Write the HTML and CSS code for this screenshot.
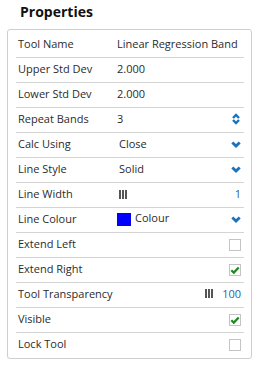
FILE: index.html
```html
<!DOCTYPE html>
<html>
<head>
    <meta charset="UTF-8">
    <link rel="stylesheet" href="styles.css">
</head>
<body>
    <div class="panel">
        <div class="panel_title">Properties</div>

        <div class="props">
            <div class="prop">
                <div class="prop_label">Tool Name</div>
                <div class="prop_value">Linear Regression Band</div>
            </div>
            <div class="prop">
                <div class="prop_label">Upper Std Dev</div>
                <div class="prop_value">2.000</div>
            </div>
            <div class="prop">
                <div class="prop_label">Lower Std Dev</div>
                <div class="prop_value">2.000</div>
            </div>
            <div class="prop">
                <div class="prop_label">Repeat Bands</div>
                <div class="prop_value">3</div>
                <svg class="spin" width="8" height="12" viewBox="0 0 8 12">
                    <path d="M1 5 L4 2 L7 5 M1 7 L4 10 L7 7" fill="none" stroke="#1b72bd" stroke-width="2.4"/>
                </svg>
            </div>
            <div class="prop">
                <div class="prop_label">Calc Using</div>
                <div class="prop_value sel">Close</div>
                <svg class="chev" width="10" height="7" viewBox="0 0 10 7">
                    <path d="M1.3 1.4 L5 5 L8.7 1.4" fill="none" stroke="#1b72bd" stroke-width="2.8"/>
                </svg>
            </div>
            <div class="prop">
                <div class="prop_label">Line Style</div>
                <div class="prop_value sel">Solid</div>
                <svg class="chev" width="10" height="7" viewBox="0 0 10 7">
                    <path d="M1.3 1.4 L5 5 L8.7 1.4" fill="none" stroke="#1b72bd" stroke-width="2.8"/>
                </svg>
            </div>
            <div class="prop">
                <div class="prop_label">Line Width</div>
                <div class="prop_value sel"><span class="bars"><i></i><i></i><i></i></span></div>
                <div class="num">1</div>
            </div>
            <div class="prop">
                <div class="prop_label">Line Colour</div>
                <div class="prop_value colour"><span class="swatch"></span><span class="colour_text">Colour</span></div>
                <svg class="chev" width="10" height="7" viewBox="0 0 10 7">
                    <path d="M1.3 1.4 L5 5 L8.7 1.4" fill="none" stroke="#1b72bd" stroke-width="2.8"/>
                </svg>
            </div>
            <div class="prop">
                <div class="prop_label">Extend Left</div>
                <div class="prop_value"></div>
                <span class="check"></span>
            </div>
            <div class="prop">
                <div class="prop_label">Extend Right</div>
                <div class="prop_value"></div>
                <span class="check"><svg width="10" height="10" viewBox="0 0 10 10"><path d="M1.3 5.2 L3.8 7.6 L8.7 2.4" fill="none" stroke="#1e8a1e" stroke-width="2.2"/></svg></span>
            </div>
            <div class="prop">
                <div class="prop_label wide">Tool Transparency</div>
                <div class="trans">
                    <span class="bars"><i></i><i></i><i></i></span>
                    <span class="num">100</span>
                </div>
            </div>
            <div class="prop">
                <div class="prop_label">Visible</div>
                <div class="prop_value"></div>
                <span class="check"><svg width="10" height="10" viewBox="0 0 10 10"><path d="M1.3 5.2 L3.8 7.6 L8.7 2.4" fill="none" stroke="#1e8a1e" stroke-width="2.2"/></svg></span>
            </div>
            <div class="prop">
                <div class="prop_label">Lock Tool</div>
                <div class="prop_value"></div>
                <span class="check"></span>
            </div>
        </div>
    </div>
</body>
</html>
```

FILE: styles.css
```css
body {
    margin: 0;
    background-color: #ffffff;
    font-family: 'Open Sans', 'Liberation Sans', sans-serif;
    color: #333333;
}

.panel {
    padding: 2px 0 0 7px;
}

.panel_title {
    font-size: 14px;
    font-weight: bold;
    line-height: 20px;
    color: #111111;
    padding-left: 13px;
    margin-bottom: 7px;
}

.props {
    box-sizing: border-box;
    width: 245px;
    border: 1px solid #cfcfcf;
    border-radius: 3px;
    padding: 3px 7px 1px 8px;
    box-shadow: 0 1px 1px rgba(0, 0, 0, 0.06);
}

.prop {
    display: grid;
    grid-template-columns: 99px 1fr auto;
    align-items: center;
    height: 21px;
    padding: 0 3px 3px 2px;
    border-bottom: 1px solid #d4d4d4;
    font-size: 11px;
    line-height: 21px;
    white-space: nowrap;
}

.prop:last-child {
    border-bottom: none;
}

.prop_label {
    color: #2b2b2b;
}

.prop_label.wide {
    grid-column: 1 / 3;
}

.prop_value {
    color: #2b2b2b;
}

.sel {
    padding-left: 2px;
}

.chev {
    display: block;
    margin-top: 1px;
}

.spin {
    display: block;
    margin-right: 1px;
}

.bars {
    display: inline-flex;
    gap: 1px;
    vertical-align: -1px;
}

.bars i {
    display: block;
    width: 2px;
    height: 9px;
    background-color: #555555;
}

.num {
    color: #2b5fa6;
}

.colour {
    display: flex;
    align-items: center;
    padding-left: 0;
}

.swatch {
    display: block;
    width: 14px;
    height: 13px;
    background-color: #0000ff;
    margin-top: 2px;
}

.colour_text {
    margin-left: 4px;
    margin-top: -2px;
}

.trans {
    display: flex;
    align-items: center;
    gap: 9px;
}

.check {
    box-sizing: border-box;
    display: flex;
    align-items: center;
    justify-content: center;
    width: 12px;
    height: 12px;
    border: 1px solid #c4c4c4;
    background-color: #ffffff;
    margin-top: 2px;
}
```
